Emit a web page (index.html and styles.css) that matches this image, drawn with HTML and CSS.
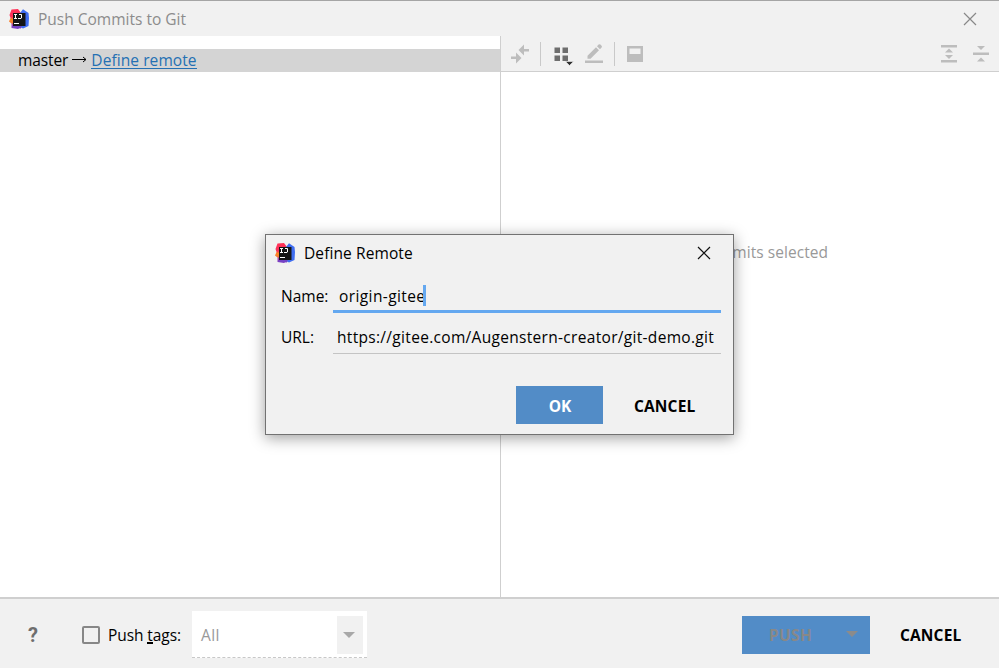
FILE: index.html
```html
<!DOCTYPE html>
<html lang="en">
<head>
<meta charset="utf-8">
<title>Push Commits to Git</title>
<link rel="stylesheet" href="styles.css">
</head>
<body>
<svg width="0" height="0" class="defs" aria-hidden="true">
  <defs>
    <linearGradient id="warm" x1="0" y1="0" x2="0" y2="1"><stop offset="0" stop-color="#ff3358"/><stop offset=".4" stop-color="#fb315b"/><stop offset=".52" stop-color="#fb8a24"/><stop offset=".68" stop-color="#f57a35"/><stop offset=".78" stop-color="#a13fb0"/><stop offset="1" stop-color="#7b3fc4"/></linearGradient>
    <symbol id="idea" viewBox="0 0 20 20">
      <path d="M2.500 .5 9 0 12 4v14l-3 2-6.500-1V14.500L0 12.500 1.500 9 .5 6z" fill="url(#warm)"/>
      <path d="M11 4 14 .3 19.500 4l.5 5-.5 8-5.500 2.500L9 17z" fill="#3f6df0"/>
      <path d="M4 16h9l-1 3.500-9-1z" fill="#7343c5"/>
      <path d="M4 4H16.500v13H4z" fill="#151515"/>
      <path d="M5 5.500h3M6.500 5.500v4M5 9.500h3M10 5.500h2.500v3.500l-.5.500H9M5 14.500h5" fill="none" stroke="#fff" stroke-width="1"/>
    </symbol>
  </defs>
</svg>
<div class="window">
  <header class="titlebar">
    <svg class="logo"><use href="#idea"/></svg>
    <span class="window-title">Push Commits to Git</span>
    <svg class="close" viewBox="0 0 12 12"><path d="M0 0 12 12M12 0 0 12"/></svg>
  </header>
  <main class="panes">
    <section class="tree">
      <div class="branch"><span class="master">master</span><svg class="arrow" viewBox="0 0 15 9"><path d="M0 4.500h14M11 2 14 4.500 11 7"/></svg><a class="link">Define remote</a></div>
    </section>
    <section class="details">
      <div class="toolbar">
        <svg viewBox="0 0 498 35" width="498" height="35">
          <g fill="#bdbdbd">
            <path d="M10 20.500h5v-4l5.500 5.500-5.500 5.500v-4.500H10zM28 13h-5V8.500L17.500 14l5.500 5.500v-4h5z"/>
            <path d="M39 6h1v24h-1zM113 6h1v24h-1z" fill="#c9c9c9"/>
            <path d="M84 24.500h18v2.500H84zM86.500 19.800l8.500-8.500 3 3-8.500 8.500h-3zM96 10.200l1.600-1.600q.9-.8 1.800 0l1.200 1.200q.8.900 0 1.800L99 13.200z"/>
            <path fill-rule="evenodd" d="M126 10h16v16h-16zM128.500 12.500v5.500h11v-5.500z"/>
            <path d="M440 9h16v2.500h-16zM440 24h16v2.500h-16zM444 16.500h8L448 12.500zM444 19h8l-4 4zM472 16.500h16V19h-16zM476 10h8l-4 4zM476 25.500h8l-4-4z"/>
          </g>
          <g fill="#6e6e6e"><path d="M53.500 11.500h5.500v5.500h-5.500zM61.500 11.500h5.500v5.500h-5.500zM53.500 19.500h5.500v5.500h-5.500zM61.500 19.500h5.500v5.500h-5.500z"/></g>
          <path d="M64.500 25.500h8l-4 4z" fill="#303030" stroke="#f1f1f1" stroke-width=".6"/>
        </svg>
      </div>
      <div class="empty">No commits selected</div>
    </section>
  </main>
  <footer class="footer">
    <span class="help">?</span>
    <span class="checkbox"></span>
    <span class="tags">Push <span class="mnemonic">t</span>ags:</span>
    <div class="select"><span class="all">All</span><span class="drop"><svg viewBox="0 0 12 6"><path d="M0 0h12L6 6z"/></svg></span></div>
    <div class="push"><span>PUSH</span><svg viewBox="0 0 12 6"><path d="M0 0h12L6 6z"/></svg></div>
    <span class="cancel">CANCEL</span>
  </footer>
</div>
<div class="dialog">
  <div class="dialog-title">
    <svg class="logo"><use href="#idea"/></svg>
    <span class="dialog-name">Define Remote</span>
    <svg class="close" viewBox="0 0 12 12"><path d="M0 0 12 12M12 0 0 12"/></svg>
  </div>
  <div class="row name-row"><span class="label">Name:</span><div class="field focused"><span class="name-value">origin-gitee</span><i class="caret"></i></div></div>
  <div class="row url-row"><span class="label url-label">URL:</span><div class="field"><span class="url-value">https://gitee.com/Augenstern-creator/git-demo.git</span></div></div>
  <div class="actions"><span class="ok">OK</span><span class="cancel">CANCEL</span></div>
</div>
</body>
</html>
```
FILE: styles.css
```css
* { box-sizing: border-box; }
body { margin: 0; font: 15.5px/22px "Open Sans", "Noto Sans", sans-serif; color: #000; overflow: hidden; white-space: nowrap; }
svg { display: block; flex: none; }
.defs { position: absolute; }
.window { width: 999px; height: 668px; display: flex; flex-direction: column; background: #f1f1f1; border-top: 1px solid #a5a5a5; }
.titlebar { height: 35px; display: flex; align-items: center; padding: 1px 23px 0 9px; color: #8c8c8c; }
.logo { width: 20px; height: 20px; }
.window-title { margin-left: 9px; }
.close { width: 12px; height: 12px; margin-left: auto; overflow: visible; }
.close path { fill: none; stroke: #888; stroke-width: 1.2; }
.panes { height: 561px; display: flex; background: #fff; }
.tree { width: 500px; padding-top: 13px; }
.branch { height: 23px; background: #d4d4d4; padding: 0 0 2px 18px; display: flex; align-items: center; }
.master { letter-spacing: -.1px; }
.arrow { width: 15px; height: 9px; margin: 0 4px 0 4px; }
.arrow path { fill: none; stroke: #000; stroke-width: 1; }
.link { color: #2470b3; border-bottom: 1px solid #2470b3; height: 19px; line-height: 20px; letter-spacing: .08px; }
.details { flex: 1; border-left: 1px solid #cfcfcf; }
.toolbar { height: 36px; background: #f1f1f1; border-bottom: 1px solid #cfcfcf; }
.empty { margin-top: 169px; text-align: right; padding-right: 171px; color: #999; letter-spacing: .05px; }
.footer { height: 71px; border-top: 2px solid #cfcfcf; display: flex; align-items: center; padding: 2px 0 0 28px; }
.help { width: 12px; font: 700 20px/24px Roboto, sans-serif; color: #6e6e6e; padding-top: 1px; }
.checkbox { width: 18px; height: 18px; border: 2px solid #878787; border-radius: 2px; margin: 1px 0 0 42px; }
.tags { margin-left: 8px; width: 84px; padding-top: 1px; letter-spacing: -.08px; }
.mnemonic { box-shadow: inset 0 -2px #000; display: inline-block; height: 20px; line-height: 22px; vertical-align: top; }
.select { width: 175px; height: 47px; background: #fff; border-bottom: 1px dashed #c8c8c8; display: flex; align-items: center; color: #999; padding: 0 4px 0 9px; }
.all { padding-top: 2px; letter-spacing: .4px; }
.drop { width: 26px; height: 38px; background: #f1f1f1; margin: 1px 0 0 auto; display: flex; align-items: center; padding-left: 6px; }
.drop svg, .push svg { width: 12px; height: 6px; fill: #a8a8a8; }
.push { margin-left: 375px; width: 128px; height: 38px; background: #528cc7; color: #888; font-weight: 700; display: flex; align-items: center; padding-left: 27px; letter-spacing: .3px; }
.push svg { margin: -2px 12px 0 auto; fill: #8b8b8b; }
.cancel { font-weight: 700; letter-spacing: .15px; }
.footer .cancel { margin-left: 30px; padding-top: 1px; }
.dialog { position: absolute; left: 265px; top: 234px; width: 469px; height: 201px; border: 1px solid #727272; background: #f1f1f1; box-shadow: 0 3px 14px rgba(0,0,0,.38); }
.dialog-title { display: flex; align-items: center; height: 36px; padding: 0 23px 0 9px; }
.dialog-name { margin-left: 9px; letter-spacing: .1px; }
.dialog .close path { stroke: #111; }
.row { display: flex; margin-left: 15px; }
.name-row { margin-top: 12px; }
.url-row { margin-top: 11px; }
.label { width: 52px; padding-top: 2px; }
.field { width: 388px; height: 30px; border-bottom: 1px solid #c4c4c4; padding: 2px 0 0 4px; display: flex; }
.focused { border-bottom: 3px solid #64a8f0; padding: 2px 0 0 6px; }
.name-value { letter-spacing: .4px; }
.url-value { letter-spacing: .31px; }
.caret { width: 3px; height: 21px; margin: 0 0 0 -2px; background: #64a8f0; }
.actions { display: flex; margin: 32px 0 0 250px; height: 38px; line-height: 41px; }
.ok { width: 87px; background: #528cc7; color: #fff; font-weight: 700; text-align: center; padding-left: 1px; }
.actions .cancel { margin-left: 31px; }
```
